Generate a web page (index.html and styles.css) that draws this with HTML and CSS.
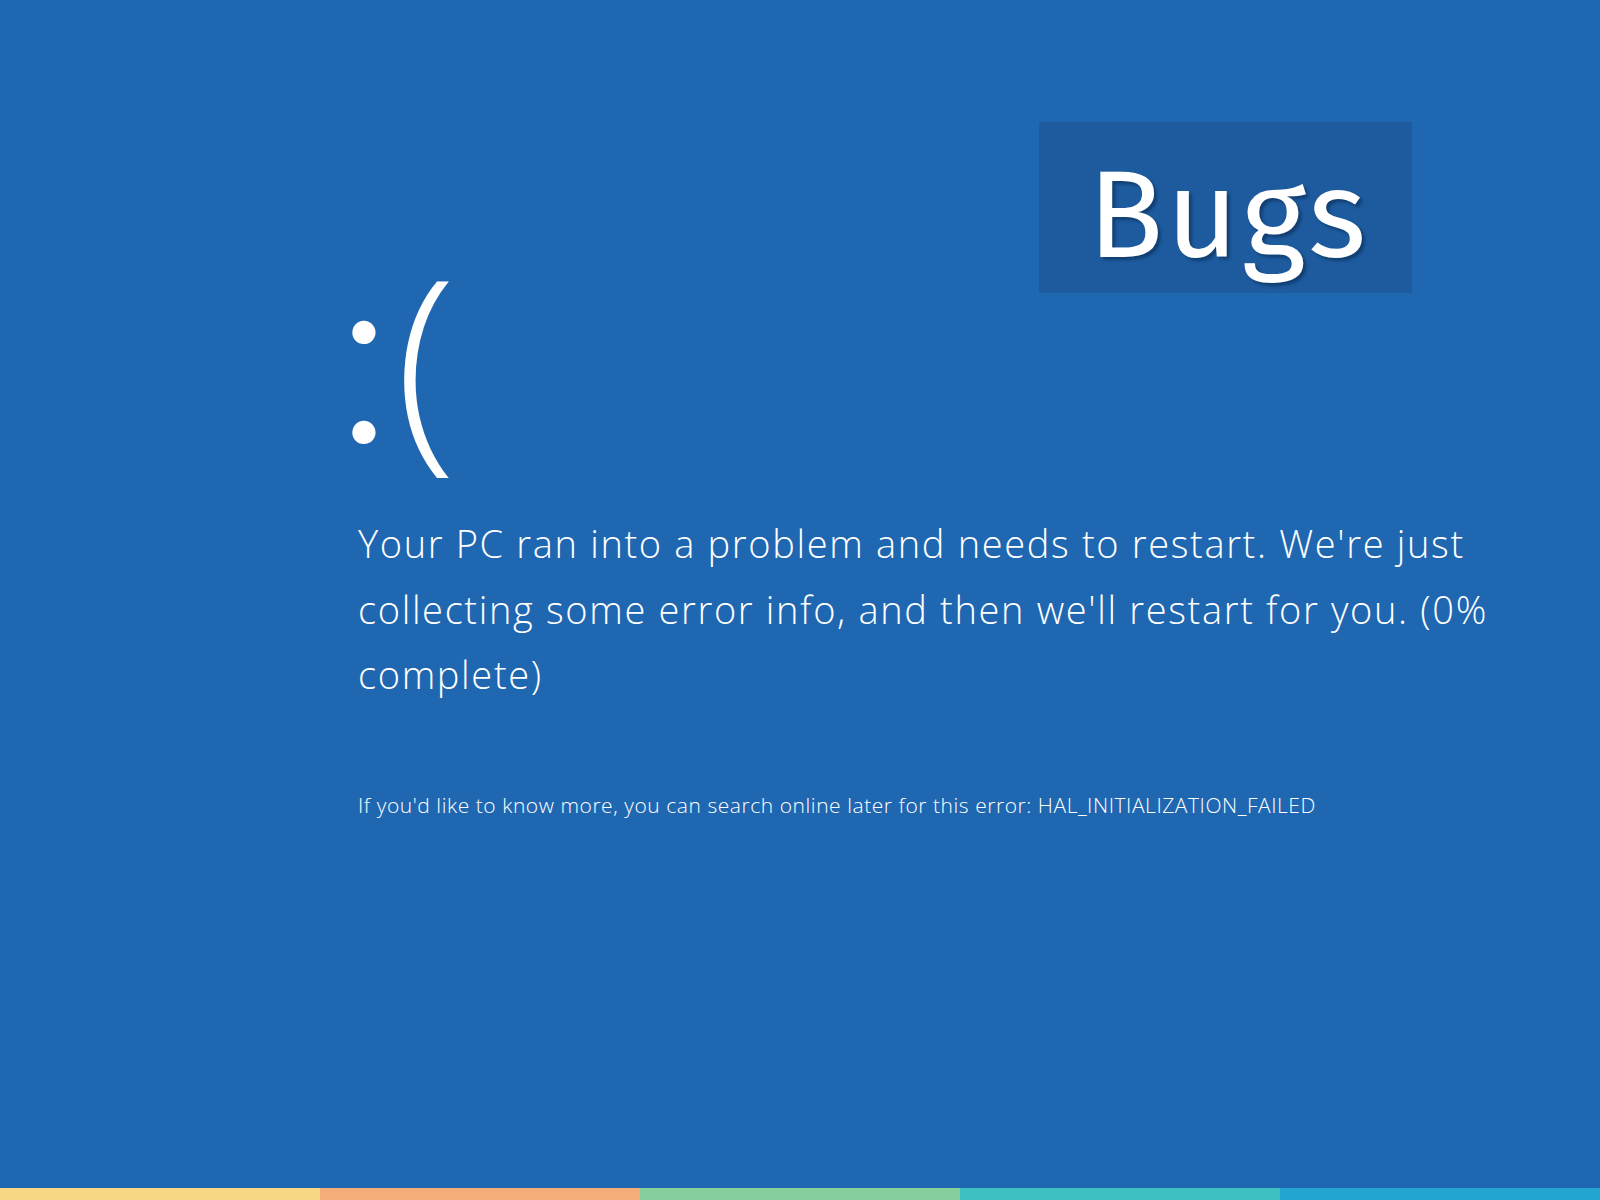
FILE: index.html
```html
<!DOCTYPE html>
<html lang="en">
<head>
<meta charset="utf-8">
<title>Bugs</title>
<link rel="stylesheet" href="styles.css">
</head>
<body>
<div class="screen">
  <div class="label"><span class="label-text">Bugs</span></div>
  <main class="content">
    <div class="face"><span class="face-eyes">:</span>(</div>
    <p class="message">Your PC ran into a problem and needs to restart. We're just collecting some error info, and then we'll restart for you. (0% complete)</p>
    <p class="hint">If you'd like to know more, you can search online later for this error: HAL_INITIALIZATION_FAILED</p>
  </main>
  <div class="stripe">
    <span class="seg seg-1"></span>
    <span class="seg seg-2"></span>
    <span class="seg seg-3"></span>
    <span class="seg seg-4"></span>
    <span class="seg seg-5"></span>
  </div>
</div>
</body>
</html>
```
FILE: styles.css
```css
html, body {
  margin: 0;
  padding: 0;
}
body {
  background: #2067b2;
  font-family: "Open Sans", "Noto Sans", sans-serif;
  color: #ffffff;
}
.screen {
  position: relative;
  width: 1600px;
  height: 1200px;
  display: flex;
  flex-direction: column;
  overflow: hidden;
}
.label {
  position: absolute;
  left: 1039px;
  top: 122px;
  width: 373px;
  height: 171px;
  background: #1d5b9e;
  display: flex;
  align-items: center;
  justify-content: center;
}
.label-text {
  font-family: "Fira Sans", "Open Sans", sans-serif;
  font-size: 124px;
  font-weight: 400;
  line-height: 1;
  letter-spacing: 3px;
  color: #ffffff;
  text-shadow: 3px 3px 3px rgba(10, 40, 80, 0.55);
  margin-top: 16px;
  margin-left: 6px;
}
.content {
  flex: 1;
  padding-left: 358px;
  padding-top: 243px;
  width: 1150px;
}
.face {
  font-weight: 300;
  font-size: 225px;
  line-height: 1;
  height: 268px;
  margin-left: -24px;
}
.face-eyes {
  font-family: "Lato", "Open Sans", sans-serif;
  font-weight: 300;
  font-size: 250px;
  line-height: 0;
  letter-spacing: 1px;
}
.message {
  margin: 0;
  font-weight: 300;
  font-size: 38px;
  line-height: 65.5px;
  letter-spacing: 1.65px;
}
.hint {
  margin: 82px 0 0;
  font-weight: 300;
  font-size: 21px;
  line-height: 30px;
  letter-spacing: 0.55px;
}
.stripe {
  display: flex;
  height: 12px;
}
.seg {
  flex: 1;
}
.seg-1 { background: #f9d684; }
.seg-2 { background: #f4ad78; }
.seg-3 { background: #88cd9c; }
.seg-4 { background: #3ebfc1; }
.seg-5 { background: #22a6d1; }
```
